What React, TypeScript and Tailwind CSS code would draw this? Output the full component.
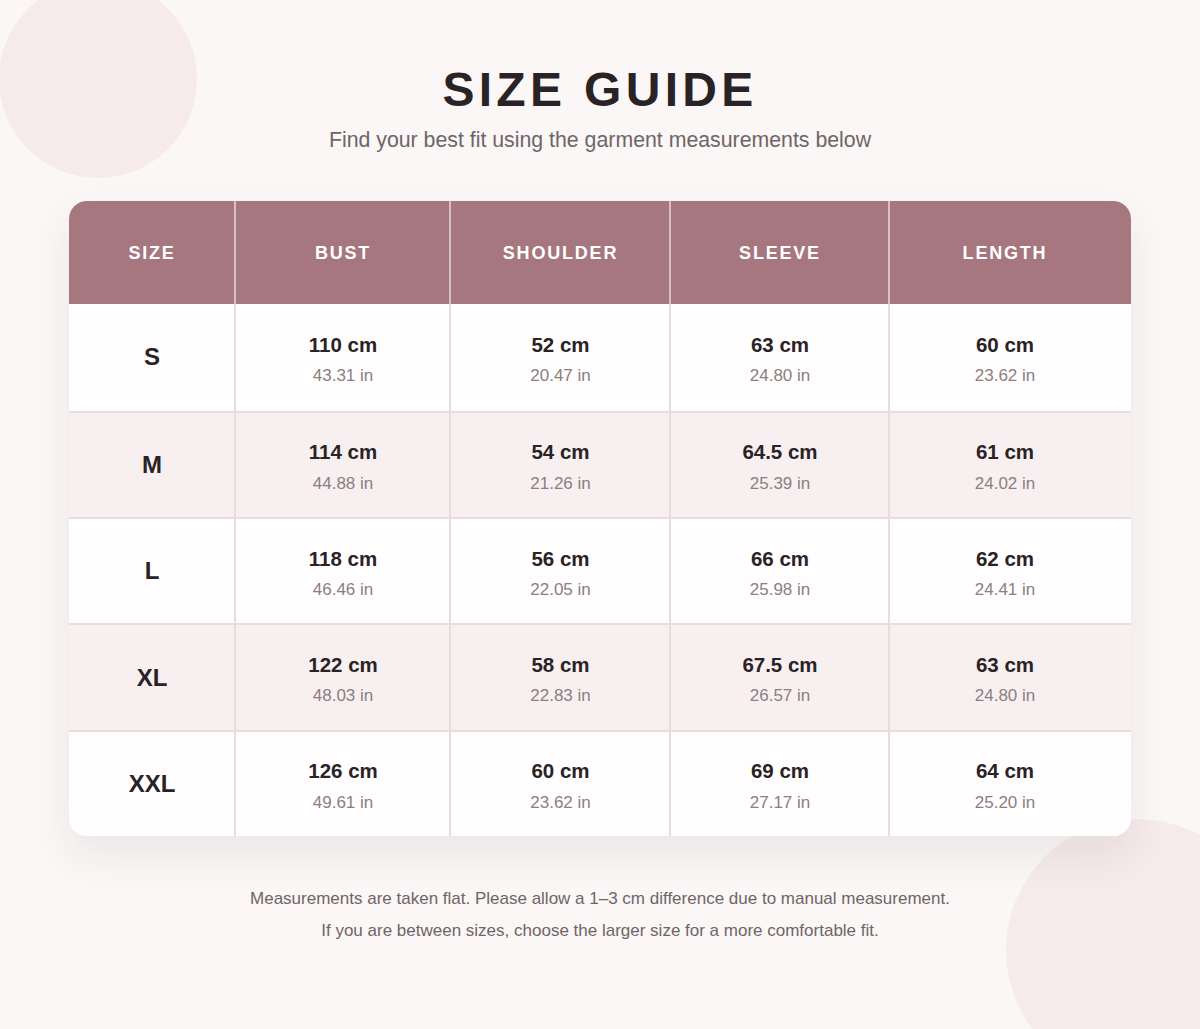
import React from "react";

const rows = [
    { size: "S", bust: ["110 cm", "43.31 in"], shoulder: ["52 cm", "20.47 in"], sleeve: ["63 cm", "24.80 in"], length: ["60 cm", "23.62 in"] },
    { size: "M", bust: ["114 cm", "44.88 in"], shoulder: ["54 cm", "21.26 in"], sleeve: ["64.5 cm", "25.39 in"], length: ["61 cm", "24.02 in"] },
    { size: "L", bust: ["118 cm", "46.46 in"], shoulder: ["56 cm", "22.05 in"], sleeve: ["66 cm", "25.98 in"], length: ["62 cm", "24.41 in"] },
    { size: "XL", bust: ["122 cm", "48.03 in"], shoulder: ["58 cm", "22.83 in"], sleeve: ["67.5 cm", "26.57 in"], length: ["63 cm", "24.80 in"] },
    { size: "XXL", bust: ["126 cm", "49.61 in"], shoulder: ["60 cm", "23.62 in"], sleeve: ["69 cm", "27.17 in"], length: ["64 cm", "25.20 in"] },
];

const headers = ["SIZE", "BUST", "SHOULDER", "SLEEVE", "LENGTH"];

export default function App() {
    return (
        <div className="relative min-h-[1029px] w-full overflow-hidden bg-[#faf7f6] font-['Liberation_Sans',Arial,sans-serif]">
            {/* decorative blobs */}
            <div className="absolute -left-[1px] -top-[20px] h-[198px] w-[198px] rounded-full bg-[#f6eaea]" />
            <div className="absolute left-[1006px] top-[819px] h-[262px] w-[262px] rounded-full bg-[#f5ebea]" />

            <div className="relative flex flex-col items-center pt-[66px]">
                <h1 className="text-[48px] font-bold leading-none tracking-[0.09em] text-[#2a2325]">
                    SIZE GUIDE
                </h1>
                <p className="mt-4 text-[21.3px] leading-none text-[#6f6567]">
                    Find your best fit using the garment measurements below
                </p>

                <div className="mt-[50px] w-[1062px] overflow-hidden rounded-[18px] bg-white shadow-[0_18px_40px_rgba(60,40,40,0.08)]">
                    <div className="grid h-[103px] grid-cols-[166px_215px_220px_219px_242px] bg-[#a6777e]">
                        {headers.map((h, i) => (
                            <div
                                key={h}
                                className={`flex items-center justify-center pt-[1px] text-[18px] font-bold tracking-[0.1em] text-white ${i > 0 ? "-ml-px border-l-2 border-[#d8bfc2]" : ""} ${i === 4 ? "pr-[11px]" : ""}`}
                            >
                                {h}
                            </div>
                        ))}
                    </div>
                    {rows.map((r, idx) => (
                        <div
                            key={r.size}
                            className={`grid h-[106.4px] grid-cols-[166px_215px_220px_219px_242px] ${idx > 0 ? "border-t-2 border-[#e8dddd]" : ""} ${idx % 2 === 1 ? "bg-[#f8f0f0]" : "bg-[#fffdfd]"}`}
                        >
                            <div className="flex items-center justify-center text-[24px] font-bold text-[#2a2325]">
                                {r.size}
                            </div>
                            {[r.bust, r.shoulder, r.sleeve, r.length].map((v, i) => (
                                <Cell key={i} cm={v[0]} inch={v[1]} last={i === 3} />
                            ))}
                        </div>
                    ))}
                </div>

                <div className="mt-[47px] flex flex-col items-center text-[17px] leading-[32px] text-[#6f6567]">
                    <p>Measurements are taken flat. Please allow a 1–3 cm difference due to manual measurement.</p>
                    <p>If you are between sizes, choose the larger size for a more comfortable fit.</p>
                </div>
            </div>
        </div>
    );
}

const Cell = ({ cm, inch, last }: { cm: string; inch: string; last?: boolean }) => {
    return (
        <div
            className={`-ml-px flex flex-col items-center justify-center gap-[12px] border-l-2 border-[#e8dddd] pt-[4px] ${last ? "pr-[11px]" : ""}`}
        >
            <span className="text-[20.5px] font-bold leading-none text-[#2a2325]">{cm}</span>
            <span className="text-[17px] leading-none text-[#8a7f81]">{inch}</span>
        </div>
    );
};
